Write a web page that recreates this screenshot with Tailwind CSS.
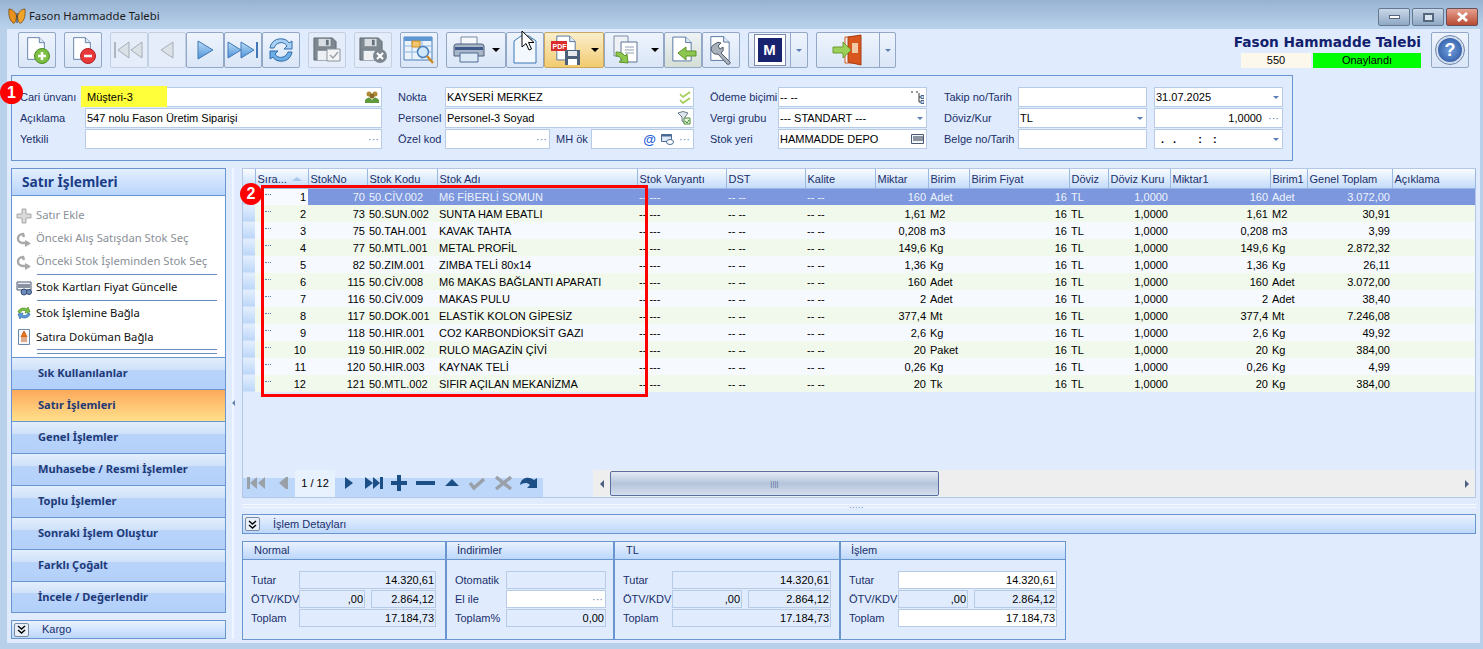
<!DOCTYPE html>
<html lang="tr"><head><meta charset="utf-8"><title>Fason Hammadde Talebi</title>
<script src="https://cdn.jsdelivr.net/npm/@tailwindcss/browser@4"></script></head>
<body class="m-0 bg-[#e0ecfd]">
<svg width="0" height="0" class="absolute"><defs>
<symbol id="doc" viewBox="0 0 24 28"><path d="M2 1h14l6 6v20H2z" fill="#fff" stroke="#4f6f9f"/><path d="M16 1v6h6" fill="#dfe8f5" stroke="#4f6f9f"/></symbol>
<symbol id="disk" viewBox="0 0 26 26"><path d="M1 1h20l4 4v20H1z" fill="#7d8790" stroke="#5f6a74"/><path d="M6 2h13v8H6z" fill="#d8dde2"/><path d="M14 3h3v6h-3z" fill="#66717c"/><path d="M5 15h16v10H5z" fill="#eef1f4"/></symbol>
</defs></svg>
<div class="relative w-[1483px] h-[649px] overflow-hidden flex flex-col bg-[#e0ecfd] font-['Liberation_Sans','Noto_Sans',sans-serif] text-[11px] text-[#1a2f6b]">

<!-- title bar -->
<div class="h-[29px] shrink-0 flex items-center pl-[8px] pr-[5px] pt-[3px] bg-linear-to-b from-[#98b3d2] to-[#b9d2ec]">
  <svg class="w-[18px] h-[17px]" viewBox="0 0 18 17"><path d="M8.500 8C7 3 4 1 1 1c-.5 5 0 11 4 14 2 1 3-2 3.500-7z" fill="#e8911c" stroke="#6b4010" stroke-width=".7"/><path d="M9.500 8C11 3 14 1 17 1c.5 5 0 11-4 14-2 1-3-2-3.500-7z" fill="#f0a52a" stroke="#6b4010" stroke-width=".7"/><path d="M9 5v10" stroke="#333" stroke-width="1"/></svg>
  <span class="ml-[3px] font-['Noto_Sans'] text-[11.300px] text-[#1b1b1b]">Fason Hammadde Talebi</span>
  <div class="ml-auto flex gap-[2px] mt-[2px]">
    <div class="w-[32px] h-[18px] rounded-[2px] border border-[#66788f] bg-linear-to-b from-[#c9d8e9] to-[#8fa8c4] flex items-center justify-center"><span class="w-[11px] h-[4px] bg-white border border-[#55677d]"></span></div>
    <div class="w-[32px] h-[18px] rounded-[2px] border border-[#66788f] bg-linear-to-b from-[#c9d8e9] to-[#8fa8c4] flex items-center justify-center"><span class="w-[11px] h-[9px] bg-[#dbe5f0] border-2 border-[#55677d]"></span></div>
    <div class="w-[32px] h-[18px] rounded-[2px] border border-[#66505a] bg-linear-to-b from-[#e6a090] to-[#b84a32] flex items-center justify-center"><svg class="w-[13px] h-[10px]" viewBox="0 0 13 10"><path d="M2 1l9 8M11 1l-9 8" stroke="#fff" stroke-width="2.800"/></svg></div>
  </div>
</div>

<!-- window body -->
<div class="flex-1 min-h-0 flex flex-col border-l-[7px] border-r-[3px] border-b-[6px] border-[#b8d0ea] pl-[4px]">

  <!-- toolbar -->
  <div class="relative mt-[3px] h-[36px] shrink-0 flex pl-[7px]">
    <div class="w-[38px] h-[36px] flex items-center justify-center rounded-[2px] border border-[#93a8c6] bg-linear-to-b from-[#eef4fd] to-[#dae6f7]"><svg class="w-[28px] h-[30px]" viewBox="0 0 28 30"><use href="#doc" x="3" y="0" width="20" height="27"/><circle cx="19" cy="21" r="7.500" fill="#7cc043" stroke="#4d8a25"/><path d="M15 21h8M19 17v8" stroke="#fff" stroke-width="2.500"/></svg></div>
    <div class="ml-[8px] w-[38px] h-[36px] flex items-center justify-center rounded-[2px] border border-[#93a8c6] bg-linear-to-b from-[#eef4fd] to-[#dae6f7]"><svg class="w-[28px] h-[30px]" viewBox="0 0 28 30"><use href="#doc" x="3" y="0" width="20" height="27"/><circle cx="19" cy="21" r="7.500" fill="#e9383a" stroke="#b31f20"/><path d="M15 21h8" stroke="#fff" stroke-width="2.500"/></svg></div>
    <div class="ml-[8px] w-[38px] h-[36px] flex items-center justify-center rounded-[2px] border border-[#c3d0e2] bg-[#e4edf9]"><svg class="w-[30px] h-[22px]" viewBox="0 0 30 22"><path d="M1 3v16" stroke="#aeb6be" stroke-width="2"/><path d="M15 3L4 11l11 8zM28 3L17 11l11 8z" fill="#dbe1e7" stroke="#a5adb5"/></svg></div>
    <div class="w-[38px] h-[36px] flex items-center justify-center rounded-[2px] border border-[#c3d0e2] bg-[#e4edf9]"><svg class="w-[20px] h-[22px]" viewBox="0 0 20 22"><path d="M16 3L4 11l12 8z" fill="#dbe1e7" stroke="#a5adb5"/></svg></div>
    <div class="w-[38px] h-[36px] flex items-center justify-center rounded-[2px] border border-[#93a8c6] bg-linear-to-b from-[#eef4fd] to-[#dae6f7]"><svg class="w-[20px] h-[22px]" viewBox="0 0 20 22"><defs><linearGradient id="bl" x1="0" y1="0" x2="0" y2="1"><stop offset="0" stop-color="#bcdcf7"/><stop offset="1" stop-color="#4e94d8"/></linearGradient></defs><path d="M3 2l15 9-15 9z" fill="url(#bl)" stroke="#3f78b5"/></svg></div>
    <div class="w-[38px] h-[36px] flex items-center justify-center rounded-[2px] border border-[#93a8c6] bg-linear-to-b from-[#eef4fd] to-[#dae6f7]"><svg class="w-[32px] h-[22px]" viewBox="0 0 32 22"><path d="M1 3l13 8-13 8zM14 3l13 8-13 8z" fill="url(#bl)" stroke="#3f78b5"/><path d="M30 3v16" stroke="#3f78b5" stroke-width="2"/></svg></div>
    <div class="w-[38px] h-[36px] flex items-center justify-center rounded-[2px] border border-[#93a8c6] bg-linear-to-b from-[#eef4fd] to-[#dae6f7]"><svg class="w-[32px] h-[28px]" viewBox="0 0 32 28"><path d="M5 12C6 5 12 2 18 3c3 .5 5 2 6 4l3-2v8h-8l3-3c-2-3-5-4-8-3-3 .8-4 3-5 5z" fill="#a9d0f2" stroke="#2f6aa8"/><path d="M27 16c-1 7-7 10-13 9-3-.5-5-2-6-4l-3 2v-8h8l-3 3c2 3 5 4 8 3 3-.8 4-3 5-5z" fill="#6eaee6" stroke="#2f6aa8"/></svg></div>
    <div class="ml-[8px] w-[38px] h-[36px] flex items-center justify-center rounded-[2px] border border-[#c3d0e2] bg-[#e4edf9]"><svg class="w-[30px] h-[28px]" viewBox="0 0 30 28"><use href="#disk" x="1" y="1" width="24" height="24"/><path d="M15 13h13v12H15z" fill="#f2f4f6" stroke="#8c959d"/><path d="M18 19l3 3 5-6" fill="none" stroke="#9aa3ab" stroke-width="1.500"/></svg></div>
    <div class="ml-[8px] w-[38px] h-[36px] flex items-center justify-center rounded-[2px] border border-[#c3d0e2] bg-[#e4edf9]"><svg class="w-[30px] h-[28px]" viewBox="0 0 30 28"><use href="#disk" x="1" y="1" width="24" height="24"/><circle cx="22" cy="20" r="7" fill="#7d8790"/><path d="M19 17l6 6M25 17l-6 6" stroke="#fff" stroke-width="2.200"/></svg></div>
    <div class="ml-[8px] w-[38px] h-[36px] flex items-center justify-center rounded-[2px] border border-[#93a8c6] bg-linear-to-b from-[#eef4fd] to-[#dae6f7]"><svg class="w-[32px] h-[30px]" viewBox="0 0 32 30"><path d="M1 2h28v23H1z" fill="#eaf3fc" stroke="#4a7fb8"/><path d="M1 2h28v4H1z" fill="#5c97d3"/><path d="M1 11h28M1 17h28M9 6v19M19 6v19" stroke="#8db5de"/><path d="M9 6h8v6H9z" fill="#f3c66e" stroke="#c98a24"/><circle cx="20" cy="17" r="5.500" fill="#cfe7fb" stroke="#4a7fb8" stroke-width="1.500"/><path d="M24 21l6 7" stroke="#c98a24" stroke-width="2.500"/></svg></div>
    <div class="ml-[8px] w-[60px] h-[36px] flex items-center pl-[6px] gap-[7px] rounded-[2px] border border-[#93a8c6] bg-linear-to-b from-[#eef4fd] to-[#dae6f7]"><svg class="w-[32px] h-[28px]" viewBox="0 0 32 28"><path d="M8 1h16v9H8z" fill="#f6f8fb" stroke="#7a8aa0"/><path d="M1 10q0-2 3-2h24q3 0 3 2v10H1z" fill="#a9b6c8" stroke="#4d5e78"/><path d="M2 11h28v3H2z" fill="#3d5a88"/><path d="M7 17h18v9H7z" fill="#dce9f7" stroke="#4d6b96"/></svg><span class="border-x-[4px] border-t-[4px] border-x-transparent border-t-black"></span></div>
    <div class="w-[38px] h-[36px] flex items-center justify-center rounded-[2px] border border-[#93a8c6] bg-linear-to-b from-[#eef4fd] to-[#dae6f7]"><svg class="w-[26px] h-[30px]" viewBox="0 0 26 30"><path d="M2 6l7-5h8l7 5v22H2z" fill="#f3f8fe" stroke="#3d78b5"/><path d="M15 1q4 0 5 4" fill="none" stroke="#7fa0bd" stroke-width="1.500"/></svg></div>
    <div class="w-[60px] h-[36px] flex items-center pl-[6px] gap-[10px] rounded-[2px] border border-[#c9a75f] bg-linear-to-b from-[#faeecb] to-[#f2cb6e]"><svg class="w-[30px] h-[30px]" viewBox="0 0 30 30"><use href="#doc" x="4" y="0" width="22" height="26"/><path d="M0 6h16v10H0z" fill="#d92c2c"/><text x="1.500" y="14" font-size="7" font-weight="700" fill="#fff" font-family="Liberation Sans">PDF</text><path d="M14 15h15v15H14z" fill="#4c5f78"/><path d="M17 16h9v5h-9z" fill="#e5e9ee"/><path d="M17 24h9v6h-9z" fill="#fff"/></svg><span class="border-x-[4px] border-t-[4px] border-x-transparent border-t-black"></span></div>
    <div class="w-[60px] h-[36px] flex items-center pl-[8px] gap-[12px] rounded-[2px] border border-[#93a8c6] bg-linear-to-b from-[#eef4fd] to-[#dae6f7]"><svg class="w-[26px] h-[30px]" viewBox="0 0 26 30"><path d="M1 1h14v20H1z" fill="#eef2f7" stroke="#7c8fa8"/><path d="M8 7h16v20H8z" fill="#fff" stroke="#5d7595"/><path d="M12 12h9M12 15h9M12 18h9" stroke="#8fa0b5"/><path d="M3 17c4 0 7 1 9 4l2-2 1 9-9-1 3-2c-2-3-3-4-6-4z" fill="#8ec74f" stroke="#5c9328"/></svg><span class="border-x-[4px] border-t-[4px] border-x-transparent border-t-black"></span></div>
    <div class="w-[38px] h-[36px] flex items-center justify-center rounded-[2px] border border-[#93a8c6] bg-linear-to-b from-[#eef3f6] to-[#d5dfd5]"><svg class="w-[30px] h-[30px]" viewBox="0 0 30 30"><use href="#doc" x="3" y="0" width="22" height="28"/><path d="M10 18l8-6v4h10v5H18v4z" fill="#8ec74f" stroke="#5c9328"/></svg></div>
    <div class="w-[38px] h-[36px] flex items-center justify-center rounded-[2px] border border-[#93a8c6] bg-linear-to-b from-[#eef4fd] to-[#dae6f7]"><svg class="w-[28px] h-[30px]" viewBox="0 0 28 30"><use href="#doc" x="2" y="0" width="22" height="27"/><path d="M8 9a5 5 0 0 1 6-1l-3 3 2 3 3-2a5 5 0 0 1-2 6l9 9c1 2-2 3-3 2l-9-10a5 5 0 0 1-3-10z" fill="#a9b1bb" stroke="#4f5b6b"/></svg></div>
    <div class="ml-[8px] w-[60px] h-[36px] flex rounded-[2px] border border-[#93a8c6] bg-linear-to-b from-[#eef4fd] to-[#dae6f7]"><div class="w-[42px] flex items-center justify-center border-r border-[#93a8c6]"><div class="w-[30px] h-[30px] bg-[#18236f] border-[3px] border-white outline outline-[#7b87a8] flex items-center justify-center text-white text-[15px] font-bold">M</div></div><div class="flex-1 flex items-center justify-center"><span class="border-x-[3px] border-t-[3px] border-x-transparent border-t-[#5d7fb8]"></span></div></div>
    <div class="ml-[8px] w-[80px] h-[36px] flex rounded-[2px] border border-[#93a8c6] bg-linear-to-b from-[#eef4fd] to-[#dae6f7]"><div class="w-[63px] flex items-center justify-center border-r border-[#93a8c6]"><svg class="w-[32px] h-[32px]" viewBox="0 0 32 32"><path d="M13 3h13v26H13z" fill="#f2f4f6" stroke="#d0561f"/><path d="M13 3l13-2v30l-13-3z" fill="#d9571f" stroke="#a63e12" transform="translate(3 0)"/><path d="M20 9h6v10h-6z" fill="#f1c9a5"/><path d="M1 13h10V8l8 8-8 8v-5H1z" fill="#9bd05a" stroke="#6d9c33"/></svg></div><div class="flex-1 flex items-center justify-center"><span class="border-x-[3px] border-t-[3px] border-x-transparent border-t-[#5d7fb8]"></span></div></div>

    <div class="ml-auto flex items-start pr-[11px]">
      <div class="flex flex-col items-end mr-[10px]">
        <div class="h-[21px] flex items-center font-['DejaVu_Sans','Liberation_Sans',sans-serif] text-[13.700px] font-bold text-[#12206e] whitespace-nowrap">Fason Hammadde Talebi</div>
        <div class="flex gap-[2px]">
          <div class="w-[70px] h-[15px] bg-[#fdf8ec] text-black flex items-center justify-center">550</div>
          <div class="w-[108px] h-[15px] bg-[#00ff00] text-black flex items-center justify-center">Onaylandı</div>
        </div>
      </div>
      <div class="w-[38px] h-[36px] flex items-center justify-center rounded-[2px] border border-[#93a8c6] bg-linear-to-b from-[#eef4fd] to-[#dae6f7]"><div class="w-[28px] h-[28px] rounded-full bg-radial from-[#6f9ede] to-[#274f9a] border-2 border-[#d3deee] flex items-center justify-center text-white text-[18px] font-bold outline outline-[#6c83a8]">?</div></div>
    </div>
  </div>

  <!-- form panel -->
  <div class="relative mt-[7px] w-[1282px] h-[86px] shrink-0 border border-[#6a96cf] pt-[11px] pl-[8px] grid grid-cols-[65px_297px_16px_47px_249px_16px_68px_149px_17px_74px_129px_7px_129px] auto-rows-[20px] gap-y-[1px] items-center">
    <span>Cari ünvanı</span>
    <div class="relative h-[20px] bg-white border border-[#b7cbe6] flex items-center pl-[1px] pr-[2px] text-black"><span class="absolute -left-[5px] -top-[2px] w-[86px] h-[21px] bg-[#ffff3a]"></span><span class="relative">Müşteri-3</span><svg class="relative ml-auto w-[14px] h-[12px]" viewBox="0 0 14 12"><circle cx="4" cy="3" r="2.500" fill="#b08a38"/><circle cx="10" cy="3" r="2.500" fill="#b08a38"/><circle cx="7" cy="5" r="2.500" fill="#8a6a26"/><path d="M0 9q4-5 7 0q3-5 7 0v3H0z" fill="#5f9a3c"/></svg></div>
    <span></span><span>Nokta</span>
    <div class="h-[20px] bg-white border border-[#b7cbe6] flex items-center pl-[1px] pr-[2px] text-black"><span>KAYSERİ MERKEZ</span><svg class="ml-auto w-[12px] h-[13px]" viewBox="0 0 12 13"><path d="M1 3l3 3 7-5M1 9l3 3 7-5" fill="none" stroke="#a4cc55" stroke-width="1.700"/></svg></div>
    <span></span><span>Ödeme biçimi</span>
    <div class="h-[20px] bg-white border border-[#b7cbe6] flex items-center pl-[1px] pr-[2px] text-black"><span>-- --</span><svg class="ml-auto w-[14px] h-[13px]" viewBox="0 0 14 13"><path d="M1 1h2M6 1h2" stroke="#333"/><path d="M9 2v9h2M9 6h2" fill="none" stroke="#333"/><path d="M11 4.500h3v3h-3zM11 9.500h3v3h-3z" fill="#cfdcec" stroke="#4a6a94"/></svg></div>
    <span></span><span>Takip no/Tarih</span>
    <div class="h-[20px] bg-white border border-[#b7cbe6]"></div>
    <span></span>
    <div class="h-[20px] bg-white border border-[#b7cbe6] flex items-center pl-[1px] pr-[3px] text-black"><span>31.07.2025</span><span class="ml-auto border-x-[3px] border-t-[3px] border-x-transparent border-t-[#5d7fb8]"></span></div>

    <span>Açıklama</span>
    <div class="h-[20px] bg-white border border-[#b7cbe6] flex items-center pl-[1px] text-black">547 nolu Fason Üretim Siparişi</div>
    <span></span><span>Personel</span>
    <div class="h-[20px] bg-white border border-[#b7cbe6] flex items-center pl-[1px] pr-[2px] text-black"><span>Personel-3 Soyad</span><svg class="ml-auto w-[14px] h-[14px]" viewBox="0 0 14 14"><path d="M1 2q5-3 10 0L8 6v6L5 10V6z" fill="#dfe5ec" stroke="#6b7a8c"/><path d="M7 7h6v6H7z" fill="#eaf5e0" stroke="#4a8a3a"/><path d="M8 10l2 2 2-3" fill="none" stroke="#3a8a2a"/></svg></div>
    <span></span><span>Vergi grubu</span>
    <div class="h-[20px] bg-white border border-[#b7cbe6] flex items-center pl-[1px] pr-[3px] text-black"><span>--- STANDART ---</span><span class="ml-auto border-x-[3px] border-t-[3px] border-x-transparent border-t-[#5d7fb8]"></span></div>
    <span></span><span>Döviz/Kur</span>
    <div class="h-[20px] bg-white border border-[#b7cbe6] flex items-center pl-[1px] pr-[3px] text-black"><span>TL</span><span class="ml-auto border-x-[3px] border-t-[3px] border-x-transparent border-t-[#5d7fb8]"></span></div>
    <span></span>
    <div class="h-[20px] bg-white border border-[#b7cbe6] flex items-center justify-end pr-[3px] text-black"><span>1,0000</span><span class="ml-[6px] text-[#5d7fb8] leading-none">···</span></div>

    <span>Yetkili</span>
    <div class="h-[20px] bg-white border border-[#b7cbe6] flex items-center justify-end pr-[2px] text-[#5d7fb8]">···</div>
    <span></span><span>Özel kod</span>
    <div class="h-[20px] flex items-stretch">
      <div class="w-[105px] bg-white border border-[#b7cbe6] flex items-center justify-end pr-[2px] text-[#5d7fb8]">···</div>
      <span class="w-[41px] pl-[6px] flex items-center">MH ök</span>
      <div class="w-[103px] bg-white border border-[#b7cbe6] flex items-center justify-end pr-[3px] gap-[5px]"><span class="text-[#2462d8] text-[13px] font-bold leading-none">@</span><svg class="w-[13px] h-[11px]" viewBox="0 0 13 11"><path d="M.5.5h10v7H.5z" fill="#dfe9f6" stroke="#4a6a94"/><path d="M.5.5h10v2H.5z" fill="#4a6a94"/><ellipse cx="9" cy="8" rx="3.500" ry="2.500" fill="#fff" stroke="#4a6a94"/></svg><span class="text-[#5d7fb8] leading-none">···</span></div>
    </div>
    <span></span><span>Stok yeri</span>
    <div class="h-[20px] bg-white border border-[#b7cbe6] flex items-center pl-[1px] pr-[2px] text-black"><span>HAMMADDE DEPO</span><svg class="ml-auto w-[13px] h-[10px]" viewBox="0 0 13 10"><path d="M.5.5h12v9H.5z" fill="#f2f5f9" stroke="#4a5a74"/><path d="M3 2v5M5 2v5M7 2v5M9 2v5M11 2v5" stroke="#26324a"/></svg></div>
    <span></span><span>Belge no/Tarih</span>
    <div class="h-[20px] bg-white border border-[#b7cbe6]"></div>
    <span></span>
    <div class="h-[20px] bg-white border border-[#b7cbe6] flex items-center pl-[6px] pr-[3px] text-black"><span class="font-bold tracking-[3px]">. .</span><span class="ml-[19px] font-bold tracking-[4px]">: :</span><span class="ml-auto border-x-[3px] border-t-[3px] border-x-transparent border-t-[#5d7fb8]"></span></div>
  </div>

  <!-- main -->
  <div class="mt-[7px] flex-1 min-h-0 flex">
    <!-- sidebar -->
    <div class="w-[215px] shrink-0 flex flex-col font-['Noto_Sans']">
      <div class="h-[28px] shrink-0 border border-[#6a96cf] flex items-center pl-[10px] text-[13.700px] font-bold text-[#1b3c86] bg-linear-to-b from-[#e4effe] to-[#b9d5fb]">Satır İşlemleri</div>
      <div class="h-[161px] shrink-0 bg-white border-x border-[#6a96cf] pl-[4px] pt-[8px] text-[11.250px]">
        <div class="h-[23px] flex items-center text-[#8a8f97]"><svg class="w-[16px] h-[16px] mr-[4px]" viewBox="0 0 16 16"><path d="M6 1h4v5h5v4h-5v5H6v-5H1V6h5z" fill="#d9d9d9" stroke="#a9a9a9"/></svg>Satır Ekle</div>
        <div class="h-[23px] flex items-center text-[#8a8f97]"><svg class="w-[16px] h-[16px] mr-[4px]" viewBox="0 0 16 16"><path d="M13 12H7C4 12 2 10 2 7.500S4 3 7 3l1 3" fill="none" stroke="#a9a9a9" stroke-width="2.500"/><path d="M9 9l6 3.500L9 16z" fill="#a9a9a9"/></svg>Önceki Alış Satışdan Stok Seç</div>
        <div class="h-[23px] flex items-center text-[#8a8f97]"><svg class="w-[16px] h-[16px] mr-[4px]" viewBox="0 0 16 16"><path d="M13 12H7C4 12 2 10 2 7.500S4 3 7 3l1 3" fill="none" stroke="#a9a9a9" stroke-width="2.500"/><path d="M9 9l6 3.500L9 16z" fill="#a9a9a9"/></svg>Önceki Stok İşleminden Stok Seç</div>
        <div class="ml-[21px] w-[180px] h-[1px] bg-[#6a8cc0] mt-[1px]"></div>
        <div class="h-[25px] flex items-center text-[#101010]"><svg class="w-[16px] h-[16px] mr-[4px]" viewBox="0 0 16 16"><path d="M1 2h14v8H1z" fill="#eef1f6" stroke="#4a5a74"/><path d="M3 4v4M5 4v4M7 4v4M9 4v4M11 4v4M13 4v4" stroke="#26324a"/><circle cx="8" cy="12" r="3" fill="#6f8cb8" stroke="#2f4a74"/><circle cx="13" cy="12" r="2.500" fill="#6f8cb8" stroke="#2f4a74"/></svg>Stok Kartları Fiyat Güncelle</div>
        <div class="ml-[21px] w-[180px] h-[1px] bg-[#6a8cc0]"></div>
        <div class="h-[24px] flex items-center text-[#101010]"><svg class="w-[16px] h-[16px] mr-[4px]" viewBox="0 0 16 16"><path d="M2 7c1-4 6-5 9-3l1-2 2 5-5 1 1-2C8 5 5 5 4 8z" fill="#7cc043" stroke="#4d8a25" stroke-width=".7"/><path d="M14 9c-1 4-6 5-9 3l-1 2-2-5 5-1-1 2c2 1 5 1 6-2z" fill="#5b9ad8" stroke="#2f6aa8" stroke-width=".7"/></svg>Stok İşlemine Bağla</div>
        <div class="h-[24px] flex items-center text-[#101010]"><svg class="w-[16px] h-[16px] mr-[4px]" viewBox="0 0 16 16"><path d="M2.500.5h11v15h-11z" fill="#f4f7fb" stroke="#6d86ab"/><path d="M8 2l-3 6h6zM5 10h6M5 12h6" fill="#e8731f" stroke="#c9601a"/></svg>Satıra Doküman Bağla</div>
        <div class="ml-[21px] w-[180px] h-[1px] bg-[#6a8cc0]"></div>
        <div class="ml-[21px] w-[180px] h-[1px] bg-[#6a8cc0] mt-[3px]"></div>
      </div>
      <div class="border border-[#6a96cf] flex flex-col font-bold text-[11.100px] text-[#1f3a78]">
        <div class="h-[32px] flex items-center pl-[26px] border-b border-[#6a96cf] bg-[linear-gradient(#e3eefd,#d0e1f9_38%,#b8d4fa_38%,#b3d0fb)]">Sık Kullanılanlar</div>
        <div class="h-[32px] flex items-center pl-[26px] border-b border-[#6a96cf] bg-linear-to-b from-[#fca95a] to-[#fee08c]">Satır İşlemleri</div>
        <div class="h-[32px] flex items-center pl-[26px] border-b border-[#6a96cf] bg-[linear-gradient(#e3eefd,#d0e1f9_38%,#b8d4fa_38%,#b3d0fb)]">Genel İşlemler</div>
        <div class="h-[32px] flex items-center pl-[26px] border-b border-[#6a96cf] bg-[linear-gradient(#e3eefd,#d0e1f9_38%,#b8d4fa_38%,#b3d0fb)]">Muhasebe / Resmi İşlemler</div>
        <div class="h-[32px] flex items-center pl-[26px] border-b border-[#6a96cf] bg-[linear-gradient(#e3eefd,#d0e1f9_38%,#b8d4fa_38%,#b3d0fb)]">Toplu İşlemler</div>
        <div class="h-[32px] flex items-center pl-[26px] border-b border-[#6a96cf] bg-[linear-gradient(#e3eefd,#d0e1f9_38%,#b8d4fa_38%,#b3d0fb)]">Sonraki İşlem Oluştur</div>
        <div class="h-[32px] flex items-center pl-[26px] border-b border-[#6a96cf] bg-[linear-gradient(#e3eefd,#d0e1f9_38%,#b8d4fa_38%,#b3d0fb)]">Farklı Çoğalt</div>
        <div class="h-[30px] flex items-center pl-[26px] bg-[linear-gradient(#e3eefd,#d0e1f9_38%,#b8d4fa_38%,#b3d0fb)]">İncele / Değerlendir</div>
      </div>
      <div class="mt-[7px] h-[19px] shrink-0 border border-[#6a96cf] flex items-center pl-[2px] bg-linear-to-b from-[#eaf2fe] to-[#bcd7fb] font-['Liberation_Sans']">
        <div class="w-[15px] h-[14px] rounded-[2px] border border-[#7a8aa0] bg-[#e8eff8] flex items-center justify-center"><svg class="w-[9px] h-[9px]" viewBox="0 0 9 9"><path d="M1 1l3.500 3L8 1M1 5l3.500 3L8 5" fill="none" stroke="#000" stroke-width="1.400"/></svg></div>
        <span class="ml-[13px]">Kargo</span>
      </div>
    </div>

    <!-- splitter -->
    <div class="w-[16px] shrink-0 pl-[6px]"><div class="w-[2px] h-[471px] bg-[#f0f6ff] flex items-start pt-[232px]"><span class="border-y-[3px] border-r-[3px] border-y-transparent border-r-[#6a86b0]"></span></div></div>

    <!-- right -->
    <div class="w-[1234px] shrink-0 flex flex-col">
      <!-- grid -->
      <div class="h-[330px] shrink-0 border border-[#b3c8e6] flex flex-col">
        <table class="w-[1232px] table-fixed border-collapse text-[11px] text-black [&_td]:h-[17px] [&_td]:px-[2px] [&_td]:pt-[1px] [&_td]:pb-0 [&_td]:leading-none [&_td]:whitespace-nowrap [&_td]:overflow-hidden [&_th]:h-[19px] [&_th]:px-[2px] [&_th]:pt-[1px] [&_th]:font-normal [&_th]:text-left [&_th]:whitespace-nowrap [&_th]:overflow-hidden [&_th]:border-r [&_th]:border-[#9ab9e2] [&_th]:border-b [&_th]:bg-linear-to-b [&_th]:from-[#fafcff] [&_th]:to-[#c3dbf9] [&_th]:text-[#1a2f6b]">
          <colgroup><col class="w-[12px]"><col class="w-[53px]"><col class="w-[59px]"><col class="w-[70px]"><col class="w-[200px]"><col class="w-[89px]"><col class="w-[79px]"><col class="w-[70px]"><col class="w-[53px]"><col class="w-[41px]"><col class="w-[100px]"><col class="w-[39px]"><col class="w-[62px]"><col class="w-[100px]"><col class="w-[37px]"><col class="w-[85px]"><col class="w-[83px]"></colgroup>
          <thead><tr><th></th><th><span class="flex items-center">Sıra...<span class="ml-auto mr-[4px] border-x-[5px] border-b-[4px] border-x-transparent border-b-[#a9c6ec]"></span></span></th><th>StokNo</th><th>Stok Kodu</th><th>Stok Adı</th><th>Stok Varyantı</th><th>DST</th><th>Kalite</th><th>Miktar</th><th>Birim</th><th>Birim Fiyat</th><th>Döviz</th><th>Döviz Kuru</th><th>Miktar1</th><th>Birim1</th><th>Genel Toplam</th><th>Açıklama</th></tr></thead>
          <tbody>
            <tr class="bg-[#7c97dd] text-[#eef3fc]"><td class="bg-linear-to-b from-[#e3eefd] to-[#bcd6f8] border-b border-[#e0ecfd]"></td><td class="bg-[#f7fbff] text-right text-black"><span class="float-left ml-[8px] mt-[2px] w-[6px] border-t border-dotted border-[#5d7fb8]"></span>1</td><td class="text-right">70</td><td>50.CİV.002</td><td>M6 FİBERLİ SOMUN</td><td>-- ---</td><td>-- --</td><td>-- --</td><td class="text-right">160</td><td>Adet</td><td class="text-right">16</td><td>TL</td><td class="text-right">1,0000</td><td class="text-right">160</td><td>Adet</td><td class="text-right">3.072,00</td><td></td></tr>
            <tr class="bg-[#f1f8ec]"><td class="bg-linear-to-b from-[#e3eefd] to-[#bcd6f8] border-b border-[#e0ecfd]"></td><td class="text-right"><span class="float-left ml-[8px] mt-[2px] w-[6px] border-t border-dotted border-[#5d7fb8]"></span>2</td><td class="text-right">73</td><td>50.SUN.002</td><td>SUNTA HAM EBATLI</td><td>-- ---</td><td>-- --</td><td>-- --</td><td class="text-right">1,61</td><td>M2</td><td class="text-right">16</td><td>TL</td><td class="text-right">1,0000</td><td class="text-right">1,61</td><td>M2</td><td class="text-right">30,91</td><td></td></tr>
            <tr class="bg-[#f6faff]"><td class="bg-linear-to-b from-[#e3eefd] to-[#bcd6f8] border-b border-[#e0ecfd]"></td><td class="text-right"><span class="float-left ml-[8px] mt-[2px] w-[6px] border-t border-dotted border-[#5d7fb8]"></span>3</td><td class="text-right">75</td><td>50.TAH.001</td><td>KAVAK TAHTA</td><td>-- ---</td><td>-- --</td><td>-- --</td><td class="text-right">0,208</td><td>m3</td><td class="text-right">16</td><td>TL</td><td class="text-right">1,0000</td><td class="text-right">0,208</td><td>m3</td><td class="text-right">3,99</td><td></td></tr>
            <tr class="bg-[#f1f8ec]"><td class="bg-linear-to-b from-[#e3eefd] to-[#bcd6f8] border-b border-[#e0ecfd]"></td><td class="text-right"><span class="float-left ml-[8px] mt-[2px] w-[6px] border-t border-dotted border-[#5d7fb8]"></span>4</td><td class="text-right">77</td><td>50.MTL.001</td><td>METAL PROFİL</td><td>-- ---</td><td>-- --</td><td>-- --</td><td class="text-right">149,6</td><td>Kg</td><td class="text-right">16</td><td>TL</td><td class="text-right">1,0000</td><td class="text-right">149,6</td><td>Kg</td><td class="text-right">2.872,32</td><td></td></tr>
            <tr class="bg-[#f6faff]"><td class="bg-linear-to-b from-[#e3eefd] to-[#bcd6f8] border-b border-[#e0ecfd]"></td><td class="text-right"><span class="float-left ml-[8px] mt-[2px] w-[6px] border-t border-dotted border-[#5d7fb8]"></span>5</td><td class="text-right">82</td><td>50.ZIM.001</td><td>ZIMBA TELİ 80x14</td><td>-- ---</td><td>-- --</td><td>-- --</td><td class="text-right">1,36</td><td>Kg</td><td class="text-right">16</td><td>TL</td><td class="text-right">1,0000</td><td class="text-right">1,36</td><td>Kg</td><td class="text-right">26,11</td><td></td></tr>
            <tr class="bg-[#f1f8ec]"><td class="bg-linear-to-b from-[#e3eefd] to-[#bcd6f8] border-b border-[#e0ecfd]"></td><td class="text-right"><span class="float-left ml-[8px] mt-[2px] w-[6px] border-t border-dotted border-[#5d7fb8]"></span>6</td><td class="text-right">115</td><td>50.CİV.008</td><td>M6 MAKAS BAĞLANTI APARATI</td><td>-- ---</td><td>-- --</td><td>-- --</td><td class="text-right">160</td><td>Adet</td><td class="text-right">16</td><td>TL</td><td class="text-right">1,0000</td><td class="text-right">160</td><td>Adet</td><td class="text-right">3.072,00</td><td></td></tr>
            <tr class="bg-[#f6faff]"><td class="bg-linear-to-b from-[#e3eefd] to-[#bcd6f8] border-b border-[#e0ecfd]"></td><td class="text-right"><span class="float-left ml-[8px] mt-[2px] w-[6px] border-t border-dotted border-[#5d7fb8]"></span>7</td><td class="text-right">116</td><td>50.CİV.009</td><td>MAKAS PULU</td><td>-- ---</td><td>-- --</td><td>-- --</td><td class="text-right">2</td><td>Adet</td><td class="text-right">16</td><td>TL</td><td class="text-right">1,0000</td><td class="text-right">2</td><td>Adet</td><td class="text-right">38,40</td><td></td></tr>
            <tr class="bg-[#f1f8ec]"><td class="bg-linear-to-b from-[#e3eefd] to-[#bcd6f8] border-b border-[#e0ecfd]"></td><td class="text-right"><span class="float-left ml-[8px] mt-[2px] w-[6px] border-t border-dotted border-[#5d7fb8]"></span>8</td><td class="text-right">117</td><td>50.DOK.001</td><td>ELASTİK KOLON GİPESİZ</td><td>-- ---</td><td>-- --</td><td>-- --</td><td class="text-right">377,4</td><td>Mt</td><td class="text-right">16</td><td>TL</td><td class="text-right">1,0000</td><td class="text-right">377,4</td><td>Mt</td><td class="text-right">7.246,08</td><td></td></tr>
            <tr class="bg-[#f6faff]"><td class="bg-linear-to-b from-[#e3eefd] to-[#bcd6f8] border-b border-[#e0ecfd]"></td><td class="text-right"><span class="float-left ml-[8px] mt-[2px] w-[6px] border-t border-dotted border-[#5d7fb8]"></span>9</td><td class="text-right">118</td><td>50.HIR.001</td><td>CO2 KARBONDİOKSİT GAZI</td><td>-- ---</td><td>-- --</td><td>-- --</td><td class="text-right">2,6</td><td>Kg</td><td class="text-right">16</td><td>TL</td><td class="text-right">1,0000</td><td class="text-right">2,6</td><td>Kg</td><td class="text-right">49,92</td><td></td></tr>
            <tr class="bg-[#f1f8ec]"><td class="bg-linear-to-b from-[#e3eefd] to-[#bcd6f8] border-b border-[#e0ecfd]"></td><td class="text-right"><span class="float-left ml-[8px] mt-[2px] w-[6px] border-t border-dotted border-[#5d7fb8]"></span>10</td><td class="text-right">119</td><td>50.HIR.002</td><td>RULO MAGAZİN ÇİVİ</td><td>-- ---</td><td>-- --</td><td>-- --</td><td class="text-right">20</td><td>Paket</td><td class="text-right">16</td><td>TL</td><td class="text-right">1,0000</td><td class="text-right">20</td><td>Kg</td><td class="text-right">384,00</td><td></td></tr>
            <tr class="bg-[#f6faff]"><td class="bg-linear-to-b from-[#e3eefd] to-[#bcd6f8] border-b border-[#e0ecfd]"></td><td class="text-right"><span class="float-left ml-[8px] mt-[2px] w-[6px] border-t border-dotted border-[#5d7fb8]"></span>11</td><td class="text-right">120</td><td>50.HIR.003</td><td>KAYNAK TELİ</td><td>-- ---</td><td>-- --</td><td>-- --</td><td class="text-right">0,26</td><td>Kg</td><td class="text-right">16</td><td>TL</td><td class="text-right">1,0000</td><td class="text-right">0,26</td><td>Kg</td><td class="text-right">4,99</td><td></td></tr>
            <tr class="bg-[#f1f8ec]"><td class="bg-linear-to-b from-[#e3eefd] to-[#bcd6f8] border-b border-[#e0ecfd]"></td><td class="text-right"><span class="float-left ml-[8px] mt-[2px] w-[6px] border-t border-dotted border-[#5d7fb8]"></span>12</td><td class="text-right">121</td><td>50.MTL.002</td><td>SIFIR AÇILAN MEKANİZMA</td><td>-- ---</td><td>-- --</td><td>-- --</td><td class="text-right">20</td><td>Tk</td><td class="text-right">16</td><td>TL</td><td class="text-right">1,0000</td><td class="text-right">20</td><td>Kg</td><td class="text-right">384,00</td><td></td></tr>
          </tbody>
        </table>
        <div class="flex-1"></div>
        <div class="h-[27px] shrink-0 flex">
          <div class="w-[300px] flex items-center bg-[linear-gradient(#e0ecfd_30%,#bcd7fa_30%)]">
            <svg class="w-[52px] h-[16px] -mt-[2px]" viewBox="0 0 52 16"><path d="M4 2h3v12H4zM14 2v12L7 8zM22 2v12l-7-6zM43 2v12l-7-6zM43 2h2v12h-2z" fill="#9aa0a8"/></svg>
            <span class="w-[40px] h-full bg-[#e8f1fe] flex items-center justify-center text-black">1 / 12</span>
            <svg class="ml-[10px] w-[198px] h-[16px] -mt-[2px]" viewBox="0 0 198 16"><g fill="#1c4f86"><path d="M0 2l8 6-8 6zM20 2l8 6-8 6zM28 2l7 6-7 6zM35 2h3v12h-3zM46 6h6V0h4v6h6v4h-6v6h-4v-6h-6zM71 6h19v4H71zM100 11l7-7 7 7z"/></g><path d="M125 8l4 5 10-9" fill="none" stroke="#9aa0a8" stroke-width="3.500"/><path d="M151 2l15 12M166 2l-15 12" stroke="#9aa0a8" stroke-width="3.500"/><path d="M175 10c1-8 9-9 14-5l3-2v10h-10l3-3c-3-3-7-2-10 0z" fill="#1c4f86"/></svg>
          </div>
          <div class="ml-[50px] flex-1 flex items-stretch bg-[#eeeeee]">
            <div class="w-[17px] flex items-center justify-center"><span class="border-y-[4px] border-r-[4px] border-y-transparent border-r-[#4f5f80]"></span></div>
            <div class="w-[329px] my-[1px] rounded-[2px] border border-[#5a6f9f] flex items-center justify-center bg-linear-to-b from-[#e4ebf4] via-[#b4c4da] to-[#d5e0ee] text-[#5a6f9f] text-[8px] leading-none">||||</div>
            <div class="ml-auto w-[17px] flex items-center justify-center"><span class="border-y-[4px] border-l-[4px] border-y-transparent border-l-[#4f5f80]"></span></div>
          </div>
        </div>
      </div>
      <!-- splitter -->
      <div class="h-[16px] shrink-0 flex flex-col pt-[6px]"><div class="h-[4px] border-y border-[#f5f9ff]"></div></div>
      <!-- details bar -->
      <div class="h-[20px] shrink-0 border border-[#6a96cf] flex items-center pl-[2px] bg-linear-to-b from-[#eaf2fe] to-[#bcd7fb]">
        <div class="w-[15px] h-[14px] rounded-[2px] border border-[#7a8aa0] bg-[#e8eff8] flex items-center justify-center"><svg class="w-[9px] h-[9px]" viewBox="0 0 9 9"><path d="M1 1l3.500 3L8 1M1 5l3.500 3L8 5" fill="none" stroke="#000" stroke-width="1.400"/></svg></div>
        <span class="ml-[13px]">İşlem Detayları</span>
      </div>
      <!-- detail panels -->
      <div class="mt-[7px] w-[824px] h-[99px] shrink-0 flex border border-[#6a96cf]">
        <div class="w-[204px] shrink-0 border-r-2 border-[#6a96cf] flex flex-col">
          <div class="h-[18px] border-b border-[#6a96cf] pl-[11px] flex items-center bg-linear-to-b from-[#eaf2fe] to-[#bcd7fb]">Normal</div>
          <div class="pt-[11px] pl-[8px] grid grid-cols-[48px_137px] auto-rows-[18px] gap-y-[1px] items-center">
            <span>Tutar</span><div class="h-[18px] border border-[#b7cbe6] flex items-center justify-end pr-[1px] text-black">14.320,61</div>
            <span>ÖTV/KDV</span><div class="h-[18px] flex gap-[6px] text-black"><div class="w-[66px] border border-[#b7cbe6] flex items-center justify-end pr-[1px]">,00</div><div class="flex-1 border border-[#b7cbe6] flex items-center justify-end pr-[1px]">2.864,12</div></div>
            <span>Toplam</span><div class="h-[18px] border border-[#b7cbe6] flex items-center justify-end pr-[1px] text-black">17.184,73</div>
          </div>
        </div>
        <div class="w-[168px] shrink-0 border-r-2 border-[#6a96cf] flex flex-col">
          <div class="h-[18px] border-b border-[#6a96cf] pl-[10px] flex items-center bg-linear-to-b from-[#eaf2fe] to-[#bcd7fb]">İndirimler</div>
          <div class="pt-[11px] pl-[8px] grid grid-cols-[51px_100px] auto-rows-[18px] gap-y-[1px] items-center">
            <span>Otomatik</span><div class="h-[18px] border border-[#b7cbe6]"></div>
            <span>El ile</span><div class="h-[18px] bg-white border border-[#b7cbe6] flex items-center justify-end pr-[2px] text-[#5d7fb8]">···</div>
            <span>Toplam%</span><div class="h-[18px] border border-[#b7cbe6] flex items-center justify-end pr-[1px] text-black">0,00</div>
          </div>
        </div>
        <div class="w-[226px] shrink-0 border-r-2 border-[#6a96cf] flex flex-col">
          <div class="h-[18px] border-b border-[#6a96cf] pl-[11px] flex items-center bg-linear-to-b from-[#eaf2fe] to-[#bcd7fb]">TL</div>
          <div class="pt-[11px] pl-[8px] grid grid-cols-[49px_159px] auto-rows-[18px] gap-y-[1px] items-center">
            <span>Tutar</span><div class="h-[18px] border border-[#b7cbe6] flex items-center justify-end pr-[1px] text-black">14.320,61</div>
            <span>ÖTV/KDV</span><div class="h-[18px] flex gap-[6px] text-black"><div class="w-[70px] border border-[#b7cbe6] flex items-center justify-end pr-[1px]">,00</div><div class="flex-1 border border-[#b7cbe6] flex items-center justify-end pr-[1px]">2.864,12</div></div>
            <span>Toplam</span><div class="h-[18px] border border-[#b7cbe6] flex items-center justify-end pr-[1px] text-black">17.184,73</div>
          </div>
        </div>
        <div class="flex-1 flex flex-col">
          <div class="h-[18px] border-b border-[#6a96cf] pl-[10px] flex items-center bg-linear-to-b from-[#eaf2fe] to-[#bcd7fb]">İşlem</div>
          <div class="pt-[11px] pl-[8px] grid grid-cols-[49px_159px] auto-rows-[18px] gap-y-[1px] items-center">
            <span>Tutar</span><div class="h-[18px] bg-white border border-[#b7cbe6] flex items-center justify-end pr-[1px] text-black">14.320,61</div>
            <span>ÖTV/KDV</span><div class="h-[18px] flex gap-[6px] text-black"><div class="w-[70px] border border-[#b7cbe6] flex items-center justify-end pr-[1px]">,00</div><div class="flex-1 border border-[#b7cbe6] flex items-center justify-end pr-[1px]">2.864,12</div></div>
            <span>Toplam</span><div class="h-[18px] bg-white border border-[#b7cbe6] flex items-center justify-end pr-[1px] text-black">17.184,73</div>
          </div>
        </div>
      </div>
    </div>
  </div>
</div>

<!-- annotations overlay -->
<div class="absolute left-[0px] top-[81px] w-[23px] h-[23px] rounded-full bg-[#ff0000] text-white text-[16px] font-bold flex items-center justify-center">1</div>
<div class="absolute left-[240px] top-[183px] w-[22px] h-[22px] rounded-full bg-[#ff0000] text-white text-[16px] font-bold flex items-center justify-center">2</div>
<div class="absolute left-[261px] top-[185px] w-[387px] h-[212px] border-[3px] border-[#ff0000]"></div>
<svg class="absolute left-[521px] top-[30px] w-[14px] h-[21px]" viewBox="0 0 14 21"><path d="M1 1v16l4-3.500 3 6.500 2.500-1-3-6.500h5.500z" fill="#fff" stroke="#000"/></svg>
<span class="absolute left-[849px] top-[501px] text-[9px] leading-none text-[#6a86b0] tracking-[.5px]">.....</span>
</div>
</body></html>
